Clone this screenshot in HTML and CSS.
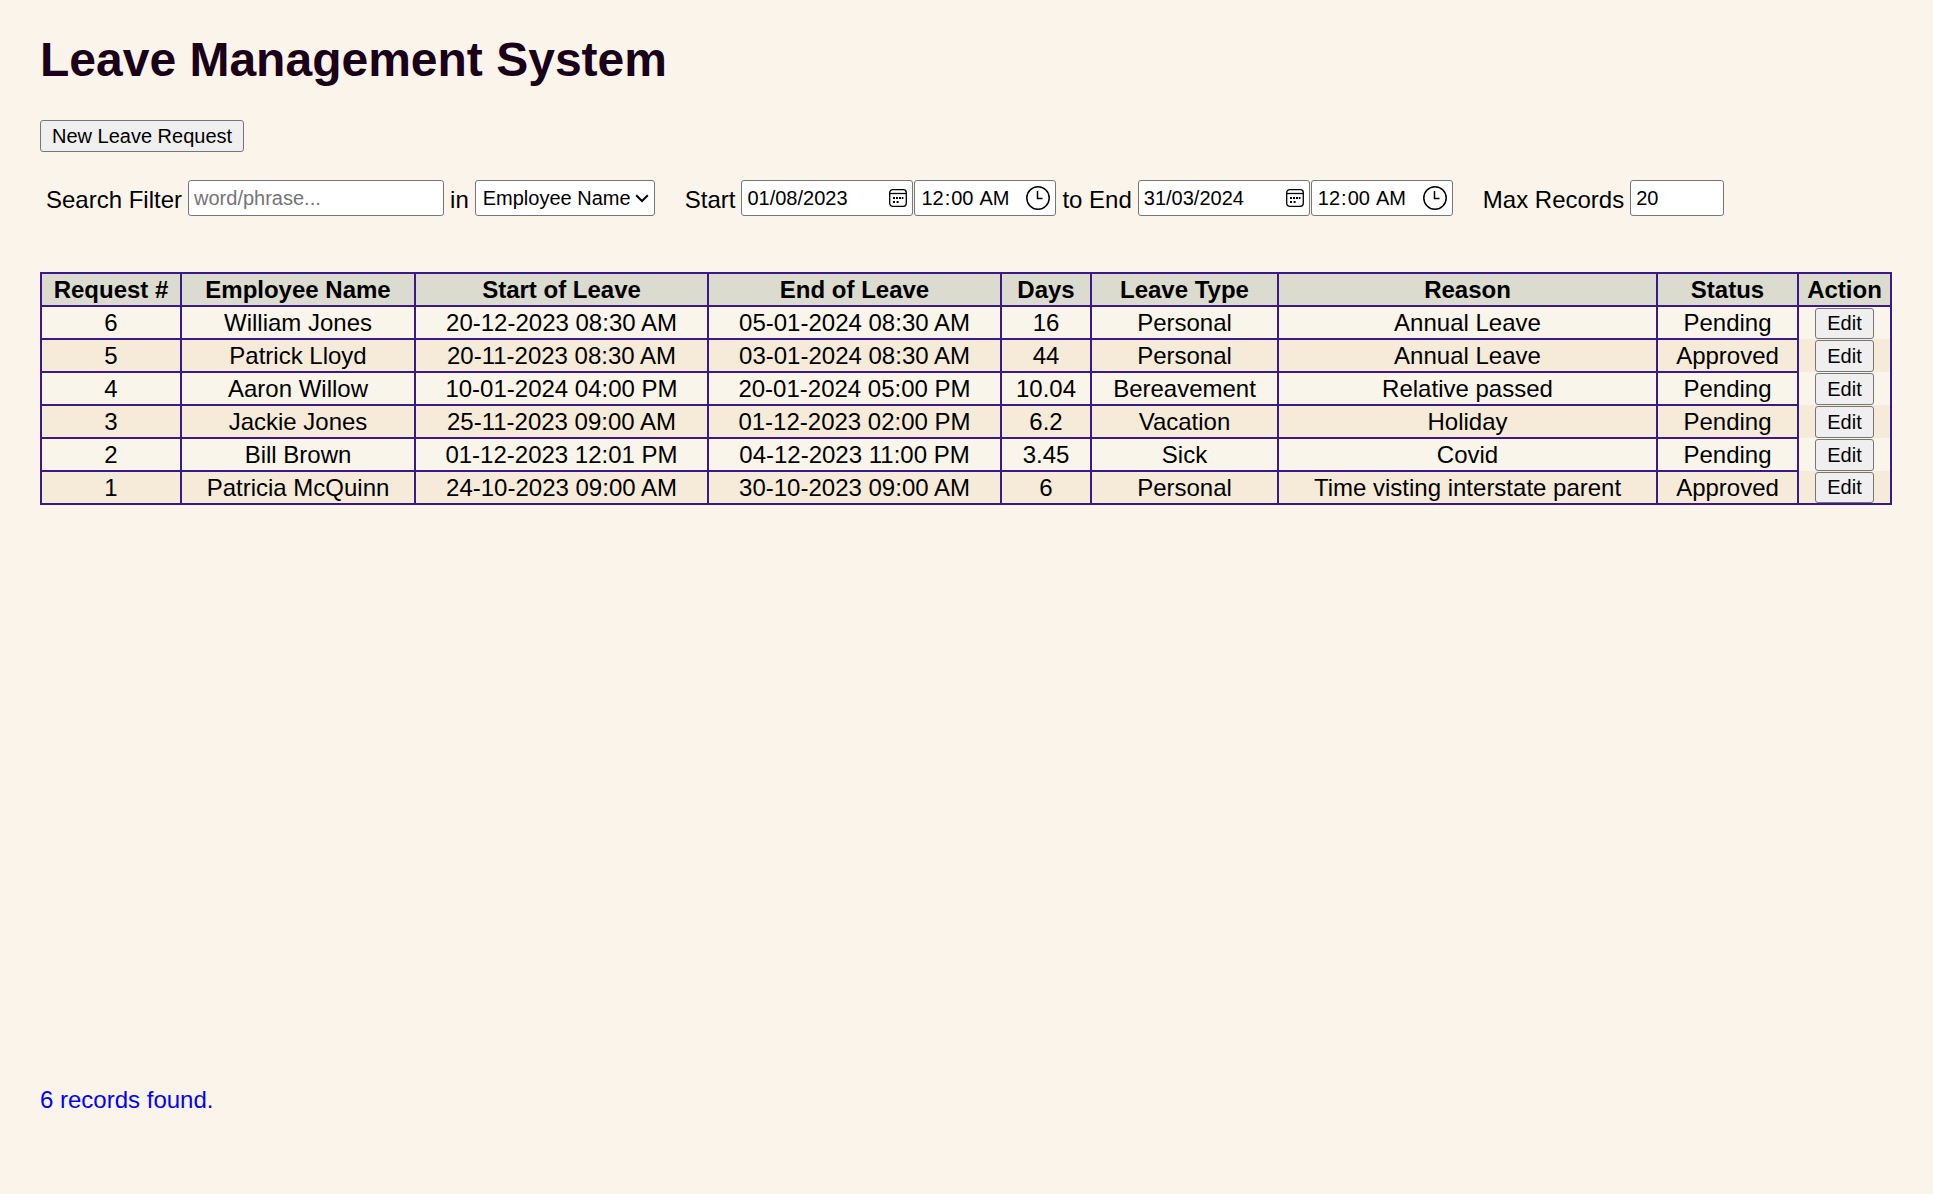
FILE: index.html
```html
<!DOCTYPE html>
<html lang="en-AU">
<head>
<meta charset="utf-8">
<meta name="viewport" content="width=device-width, initial-scale=1">
<title>Leave Management System</title>
<link rel="stylesheet" href="styles.css">
</head>
<body>
<svg class="sprite" aria-hidden="true">
  <symbol id="calendar" viewBox="0 0 18 18">
    <rect x="0.700" y="0.700" width="16.600" height="16.600" rx="3" fill="none" stroke="#000" stroke-width="1.3"/>
    <path d="M1 4.500h16" stroke="#000" stroke-width="1.3"/>
    <path d="M4 8h2v2H4zM7 8h2v2H7zM10 8h2v2h-2zM12.800 8h1.600v2h-1.600zM4 12h2v2H4zM7.600 12h2v2h-2z"/>
  </symbol>
</svg>
<main class="page">
  <h1 class="title">Leave Management System</h1>
  <div class="actions">
    <button type="button" class="button">New Leave Request</button>
  </div>
  <form class="filters">
    <div class="group">
      <label for="search">Search Filter</label>
      <input id="search" class="field search" type="text" placeholder="word/phrase...">
      <label for="column">in</label>
      <select id="column" class="field column">
        <option>Employee Name</option>
      </select>
    </div>
    <div class="group">
      <label for="start-date">Start</label>
      <div class="datetime">
        <div class="date">
          <input id="start-date" class="field date-input" type="text" value="01/08/2023">
          <svg class="calendar" aria-hidden="true"><use href="#calendar"/></svg>
        </div>
        <input class="field time" type="time" value="00:00" aria-label="Start time">
      </div>
      <label for="end-date">to End</label>
      <div class="datetime">
        <div class="date">
          <input id="end-date" class="field date-input" type="text" value="31/03/2024">
          <svg class="calendar" aria-hidden="true"><use href="#calendar"/></svg>
        </div>
        <input class="field time" type="time" value="00:00" aria-label="End time">
      </div>
    </div>
    <div class="group">
      <label for="max">Max Records</label>
      <input id="max" class="field max" type="text" inputmode="numeric" value="20">
    </div>
  </form>
  <div class="results">
    <table class="requests">
      <colgroup>
        <col class="col-id"><col class="col-name"><col class="col-when"><col class="col-when"><col class="col-days"><col class="col-type"><col><col class="col-status"><col class="col-action">
      </colgroup>
      <thead>
        <tr><th>Request #</th><th>Employee Name</th><th>Start of Leave</th><th>End of Leave</th><th>Days</th><th>Leave Type</th><th>Reason</th><th>Status</th><th>Action</th></tr>
      </thead>
      <tbody>
        <tr><td>6</td><td>William Jones</td><td>20-12-2023 08:30 AM</td><td>05-01-2024 08:30 AM</td><td>16</td><td>Personal</td><td>Annual Leave</td><td>Pending</td><td class="action"><button type="button" class="button edit">Edit</button></td></tr>
        <tr><td>5</td><td>Patrick Lloyd</td><td>20-11-2023 08:30 AM</td><td>03-01-2024 08:30 AM</td><td>44</td><td>Personal</td><td>Annual Leave</td><td>Approved</td><td class="action"><button type="button" class="button edit">Edit</button></td></tr>
        <tr><td>4</td><td>Aaron Willow</td><td>10-01-2024 04:00 PM</td><td>20-01-2024 05:00 PM</td><td>10.04</td><td>Bereavement</td><td>Relative passed</td><td>Pending</td><td class="action"><button type="button" class="button edit">Edit</button></td></tr>
        <tr><td>3</td><td>Jackie Jones</td><td>25-11-2023 09:00 AM</td><td>01-12-2023 02:00 PM</td><td>6.2</td><td>Vacation</td><td>Holiday</td><td>Pending</td><td class="action"><button type="button" class="button edit">Edit</button></td></tr>
        <tr><td>2</td><td>Bill Brown</td><td>01-12-2023 12:01 PM</td><td>04-12-2023 11:00 PM</td><td>3.45</td><td>Sick</td><td>Covid</td><td>Pending</td><td class="action"><button type="button" class="button edit">Edit</button></td></tr>
        <tr><td>1</td><td>Patricia McQuinn</td><td>24-10-2023 09:00 AM</td><td>30-10-2023 09:00 AM</td><td>6</td><td>Personal</td><td>Time visting interstate parent</td><td>Approved</td><td class="action"><button type="button" class="button edit">Edit</button></td></tr>
      </tbody>
    </table>
  </div>
  <p class="status">6 records found.</p>
</main>
</body>
</html>
```
FILE: styles.css
```css
* {
  box-sizing: border-box;
}

body {
  margin: 0;
  background: #fbf4ea;
  color: #000;
  font: 24px/28px "Liberation Sans", Arial, sans-serif;
}

.sprite {
  position: absolute;
  width: 0;
  height: 0;
}

.page {
  display: flex;
  flex-direction: column;
  min-height: 100vh;
  padding: 32px 41px 80px 40px;
}

.title {
  margin: 0 0 32px;
  color: #1a0018;
  font-size: 48px;
  line-height: 56px;
}

.actions {
  display: flex;
  margin-bottom: 28px;
}

.button {
  height: 32px;
  padding: 0 11px;
  border: 1px solid #767676;
  border-radius: 3px;
  background: #efefef;
  color: #000;
  font: 20px/24px "Liberation Sans", Arial, sans-serif;
}

.filters {
  display: flex;
  flex-wrap: wrap;
  gap: 12px 30px;
  padding-left: 6px;
  margin-bottom: 56px;
}

.group {
  display: flex;
  align-items: center;
  gap: 6px;
}

.group label {
  padding-top: 4px;
}

.field {
  height: 36px;
  margin: 0;
  padding: 0 5px;
  border: 1px solid #767676;
  border-radius: 3px;
  background: #fff;
  color: #000;
  font: 20px/24px "Liberation Sans", Arial, sans-serif;
}

.field::placeholder {
  color: #757575;
}

.search {
  width: 256px;
}

.column {
  width: 180px;
  padding: 0 5px 0 7px;
  appearance: none;
  background: #fff url("data:image/svg+xml,%3Csvg xmlns='http://www.w3.org/2000/svg' width='14' height='9' viewBox='0 0 14 9'%3E%3Cpath d='M1.2 1.2 7 7l5.800-5.800' fill='none' stroke='%23000' stroke-width='2'/%3E%3C/svg%3E") no-repeat right 5px center;
}

.datetime {
  display: flex;
  gap: 1px;
}

.date {
  position: relative;
  width: 172px;
}

.date-input {
  width: 100%;
}

.calendar {
  position: absolute;
  top: 9px;
  right: 6px;
  width: 18px;
  height: 18px;
}

.time {
  width: 142px;
}

.time::-webkit-calendar-picker-indicator {
  width: 24px;
  height: 24px;
  margin: 0;
  padding: 0;
  background: url("data:image/svg+xml,%3Csvg xmlns='http://www.w3.org/2000/svg' width='24' height='24'%3E%3Cg fill='none' stroke='%23000' stroke-width='1.5'%3E%3Ccircle cx='12' cy='12' r='11.200'/%3E%3Cpath d='M11.500 5v7.500h5'/%3E%3C/g%3E%3C/svg%3E") no-repeat center;
}

.max {
  width: 94px;
}

.results {
  flex: 1;
}

.requests {
  width: 100%;
  table-layout: fixed;
  border-collapse: collapse;
  text-align: center;
}

.requests th,
.requests td {
  padding: 0;
  border: 2px solid #3b1a87;
  line-height: 31px;
}

.requests th {
  background: #dbdbcf;
}

.requests tbody tr {
  background: #faf5ea;
}

.requests tbody tr:nth-child(even) {
  background: #f6ebd9;
}

.requests .action {
  border-top: 0;
  border-bottom: 0;
}

.requests tbody tr:first-child .action {
  border-top: 2px solid #3b1a87;
}

.requests tbody tr:last-child .action {
  border-bottom: 2px solid #3b1a87;
}

.edit {
  display: block;
  width: 59px;
  height: 32px;
  margin: 0 auto;
}

.requests tbody tr:first-child .edit,
.requests tbody tr:last-child .edit {
  height: 31px;
}

.col-id {
  width: 140px;
}

.col-name {
  width: 234px;
}

.col-when {
  width: 293px;
}

.col-days {
  width: 90px;
}

.col-type {
  width: 187px;
}

.col-status {
  width: 141px;
}

.col-action {
  width: 93px;
}

.status {
  margin: 0;
  color: #00f;
}
```
